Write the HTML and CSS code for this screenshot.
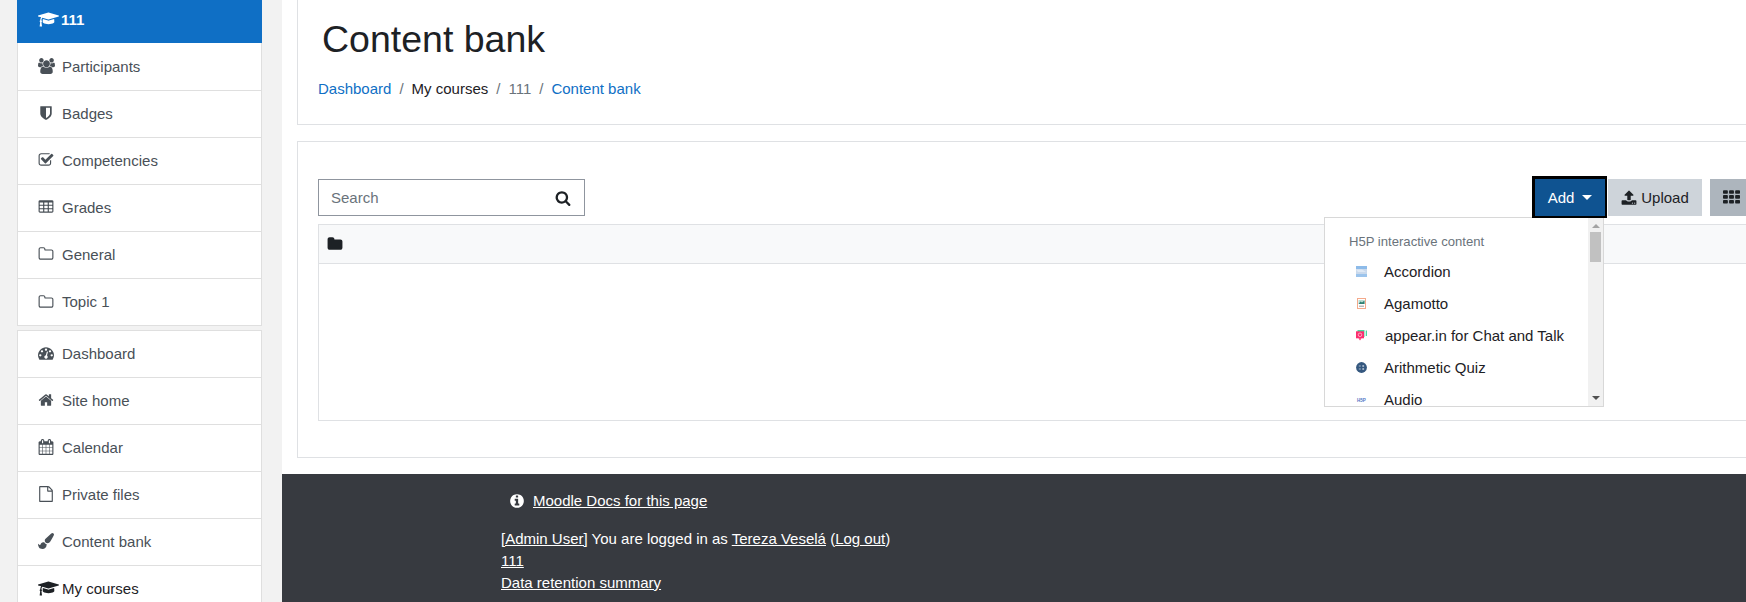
FILE: index.html
```html
<!DOCTYPE html>
<html lang="en">
<head>
<meta charset="utf-8">
<title>Content bank</title>
<link rel="stylesheet" href="styles.css">
</head>
<body>
<svg class="defs" xmlns="http://www.w3.org/2000/svg">
<symbol id="i-cap" viewBox="0 0 2304 1792"><path d="M1774 836l18 316q4 69-82 128t-235 93-323 34-323-34-235-93-82-128l18-316 574 181q22 7 48 7t48-7zm530-324q0 31-31 42l-1120 352q-4 1-10 1t-10-1l-652-206q-43 34-71 111.500t-34 178.500q63 36 63 109 0 69-58 107l58 433q2 14-8 25-9 11-24 11h-192q-15 0-24-11-10-11-8-25l58-433q-58-38-58-107 0-73 65-111 11-207 98-330l-333-104q-31-10-31-42t31-42l1120-352q4-1 10-1t10 1l1120 352q31 11 31 42z"/></symbol>
<symbol id="i-users" viewBox="0 0 1920 1792"><path d="M593 896q-162 5-265 128h-134q-82 0-138-40.500t-56-118.500q0-353 124-353 6 0 43.500 21t97.500 42.500 119 21.500q67 0 133-23-5 37-5 66 0 139 81 256zm1071 637q0 120-73 189.500t-194 69.500h-874q-121 0-194-69.500t-73-189.500q0-53 3.500-103.500t14-109 26.500-108.500 43-97.500 62-81 85.500-53.500 111.500-20q10 0 43 21.500t73 48 107 48 135 21.500 135-21.500 107-48 73-48 43-21.500q61 0 111.500 20t85.500 53.500 62 81 43 97.500 26.500 108.500 14 109 3.500 103.500zm-1024-1277q0 106-75 181t-181 75-181-75-75-181 75-181 181-75 181 75 75 181zm704 384q0 159-112.500 271.500t-271.500 112.500-271.500-112.500-112.500-271.500 112.500-271.500 271.500-112.500 271.500 112.500 112.500 271.500zm576 225q0 78-56 118.500t-138 40.500h-134q-103-123-265-128 81-117 81-256 0-29-5-66 66 23 133 23 59 0 119-21.500t97.500-42.500 43.500-21q124 0 124 353zm-128-609q0 106-75 181t-181 75-181-75-75-181 75-181 181-75 181 75 75 181z"/></symbol>
<symbol id="i-shield" viewBox="0 0 1792 1792"><path d="M1344 960v-640h-448v1137q119-63 213-137 235-184 235-360zm192-768v768q0 86-33.500 170.500t-83 150-118 127.500-126.500 103-121 77.500-89.500 49.500-42.500 20q-12 6-26 6t-26-6q-16-7-42.500-20t-89.500-49.500-121-77.500-126.500-103-118-127.500-83-150-33.500-170.500v-768q0-26 19-45t45-19h1152q26 0 45 19t19 45z"/></symbol>
<symbol id="i-check" viewBox="0 0 1792 1792"><path d="M1472 930v318q0 119-84.500 203.500t-203.500 84.500h-832q-119 0-203.500-84.500t-84.500-203.500v-832q0-119 84.500-203.500t203.500-84.500h832q63 0 117 25 15 7 18 23 3 17-9 29l-49 49q-10 10-23 10-3 0-9-2-23-6-45-6h-832q-66 0-113 47t-47 113v832q0 66 47 113t113 47h832q66 0 113-47t47-113v-254q0-13 9-22l64-64q10-10 23-10 6 0 12 3 20 8 20 29zm231-489l-814 814q-24 24-57 24t-57-24l-430-430q-24-24-24-57t24-57l110-110q24-24 57-24t57 24l263 263 647-647q24-24 57-24t57 24l110 110q24 24 24 57t-24 57z"/></symbol>
<symbol id="i-table" viewBox="0 0 1792 1792"><path d="M576 1376v-192q0-14-9-23t-23-9h-320q-14 0-23 9t-9 23v192q0 14 9 23t23 9h320q14 0 23-9t9-23zm0-384v-192q0-14-9-23t-23-9h-320q-14 0-23 9t-9 23v192q0 14 9 23t23 9h320q14 0 23-9t9-23zm512 384v-192q0-14-9-23t-23-9h-320q-14 0-23 9t-9 23v192q0 14 9 23t23 9h320q14 0 23-9t9-23zm-512-768v-192q0-14-9-23t-23-9h-320q-14 0-23 9t-9 23v192q0 14 9 23t23 9h320q14 0 23-9t9-23zm512 384v-192q0-14-9-23t-23-9h-320q-14 0-23 9t-9 23v192q0 14 9 23t23 9h320q14 0 23-9t9-23zm512 384v-192q0-14-9-23t-23-9h-320q-14 0-23 9t-9 23v192q0 14 9 23t23 9h320q14 0 23-9t9-23zm-512-768v-192q0-14-9-23t-23-9h-320q-14 0-23 9t-9 23v192q0 14 9 23t23 9h320q14 0 23-9t9-23zm512 384v-192q0-14-9-23t-23-9h-320q-14 0-23 9t-9 23v192q0 14 9 23t23 9h320q14 0 23-9t9-23zm0-384v-192q0-14-9-23t-23-9h-320q-14 0-23 9t-9 23v192q0 14 9 23t23 9h320q14 0 23-9t9-23zm128-320v1088q0 66-47 113t-113 47h-1344q-66 0-113-47t-47-113v-1088q0-66 47-113t113-47h1344q66 0 113 47t47 113z"/></symbol>
<symbol id="i-folder-o" viewBox="0 0 1792 1792"><path d="M1600 1312v-704q0-40-28-68t-68-28h-704q-40 0-68-28t-28-68v-64q0-40-28-68t-68-28h-320q-40 0-68 28t-28 68v960q0 40 28 68t68 28h1216q40 0 68-28t28-68zm128-704v704q0 92-66 158t-158 66h-1216q-92 0-158-66t-66-158v-960q0-92 66-158t158-66h320q92 0 158 66t66 158v32h672q92 0 158 66t66 158z"/></symbol>
<symbol id="i-folder" viewBox="0 0 1792 1792"><path d="M1728 608v704q0 92-66 158t-158 66h-1216q-92 0-158-66t-66-158v-960q0-92 66-158t158-66h320q92 0 158 66t66 158v32h672q92 0 158 66t66 158z"/></symbol>
<symbol id="i-dash" viewBox="0 0 1792 1792"><path d="M384 1152q0-53-37.500-90.500t-90.500-37.500-90.500 37.500-37.500 90.500 37.500 90.500 90.500 37.500 90.500-37.500 37.500-90.500zm192-448q0-53-37.500-90.500t-90.500-37.500-90.500 37.500-37.500 90.500 37.500 90.500 90.500 37.500 90.500-37.500 37.500-90.500zm428 481l101-382q6-26-7.500-48.500t-38.500-29.500-48 6.500-30 39.500l-101 382q-60 5-107 43.500t-63 98.500q-20 77 20 146t117 89 146-20 89-117q16-60-6-117t-72-91zm660-33q0-53-37.500-90.500t-90.500-37.500-90.500 37.500-37.500 90.500 37.500 90.500 90.500 37.500 90.500-37.500 37.500-90.500zm-640-640q0-53-37.500-90.500t-90.500-37.500-90.500 37.500-37.500 90.500 37.500 90.500 90.500 37.500 90.500-37.500 37.500-90.500zm448 192q0-53-37.500-90.500t-90.500-37.500-90.500 37.500-37.500 90.500 37.500 90.500 90.500 37.500 90.500-37.500 37.500-90.500zm320 448q0 261-141 483-19 29-54 29h-1402q-35 0-54-29-141-221-141-483 0-182 71-348t191-286 286-191 348-71 348 71 286 191 191 286 71 348z"/></symbol>
<symbol id="i-home" viewBox="0 0 1792 1792"><path d="M1472 992v480q0 26-19 45t-45 19h-384v-384h-256v384h-384q-26 0-45-19t-19-45v-480q0-1 .5-3t.5-3l575-474 575 474q1 2 1 6zm223-69l-62 74q-8 9-21 11h-3q-13 0-21-7l-692-577-692 577q-12 8-24 7-13-2-21-11l-62-74q-8-10-7-23.500t11-21.500l719-599q32-26 76-26t76 26l244 204v-195q0-14 9-23t23-9h192q14 0 23 9t9 23v408l219 182q10 8 11 21.500t-7 23.500z"/></symbol>
<symbol id="i-cal" viewBox="0 0 1664 1792"><path d="M128 1664h288v-288h-288v288zm352 0h320v-288h-320v288zm-352-352h288v-320h-288v320zm352 0h320v-320h-320v320zm-352-384h288v-288h-288v288zm736 736h320v-288h-320v288zm-384-736h320v-288h-320v288zm768 736h288v-288h-288v288zm-384-352h320v-320h-320v320zm-352-864v-288q0-13-9.500-22.500t-22.500-9.500h-64q-13 0-22.500 9.500t-9.500 22.500v288q0 13 9.500 22.500t22.500 9.500h64q13 0 22.500-9.500t9.500-22.500zm736 864h288v-320h-288v320zm-384-384h320v-288h-320v288zm384 0h288v-288h-288v288zm32-480v-288q0-13-9.500-22.500t-22.500-9.500h-64q-13 0-22.500 9.500t-9.500 22.500v288q0 13 9.500 22.500t22.500 9.500h64q13 0 22.500-9.500t9.500-22.500zm384-64v1280q0 52-38 90t-90 38h-1408q-52 0-90-38t-38-90v-1280q0-52 38-90t90-38h128v-96q0-66 47-113t113-47h64q66 0 113 47t47 113v96h384v-96q0-66 47-113t113-47h64q66 0 113 47t47 113v96h128q52 0 90 38t38 90z"/></symbol>
<symbol id="i-file" viewBox="0 0 1792 1792"><path d="M1596 380q28 28 48 76t20 88v1152q0 40-28 68t-68 28h-1344q-40 0-68-28t-28-68v-1600q0-40 28-68t68-28h896q40 0 88 20t76 48zm-444-244v376h376q-10-29-22-41l-313-313q-12-12-41-22zm384 1528v-1024h-416q-40 0-68-28t-28-68v-416h-768v1536h1280z"/></symbol>
<symbol id="i-brush" viewBox="0 0 1792 1792"><path d="M1615 0q70 0 122.500 46.500t52.500 116.500q0 63-45 151-332 629-465 752-97 91-218 91-126 0-216.500-92.500t-90.500-219.500q0-128 92-212l638-579q59-54 130-54zm-909 1034q39 76 106.500 130t150.500 76l1 71q4 213-129.500 347t-348.500 134q-123 0-218-46.500t-152.500-127.500-86.500-183-29-220q7 5 41 30t62 44.500 59 36.500 46 17q41 0 55-37 25-66 57.500-112.500t69.500-76 88-47.500 103-25.500 125-10.500z"/></symbol>
<symbol id="i-search" viewBox="0 0 1792 1792"><path d="M1216 832q0-185-131.500-316.500t-316.500-131.500-316.500 131.500-131.500 316.500 131.500 316.500 316.500 131.500 316.500-131.500 131.500-316.500zm512 832q0 52-38 90t-90 38q-54 0-90-38l-343-342q-179 124-399 124-143 0-273.500-55.500t-225-150-150-225-55.500-273.500 55.500-273.500 150-225 225-150 273.500-55.500 273.500 55.500 225 150 150 225 55.500 273.500q0 220-124 399l343 343q37 37 37 90z"/></symbol>
<symbol id="i-upload" viewBox="0 0 1792 1792"><path d="M1344 1472q0-26-19-45t-45-19-45 19-19 45 19 45 45 19 45-19 19-45zm256 0q0-26-19-45t-45-19-45 19-19 45 19 45 45 19 45-19 19-45zm128-224v320q0 40-28 68t-68 28h-1472q-40 0-68-28t-28-68v-320q0-40 28-68t68-28h427q21 56 70.500 92t110.500 36h256q61 0 110.500-36t70.500-92h427q40 0 68 28t28 68zm-325-648q-17 40-59 40h-256v448q0 26-19 45t-45 19h-256q-26 0-45-19t-19-45v-448h-256q-42 0-59-40-17-39 14-69l448-448q18-19 45-19t45 19l448 448q31 30 14 69z"/></symbol>
<symbol id="i-th" viewBox="0 0 1792 1792"><path d="M512 1248v192q0 40-28 68t-68 28h-320q-40 0-68-28t-28-68v-192q0-40 28-68t68-28h320q40 0 68 28t28 68zm0-512v192q0 40-28 68t-68 28h-320q-40 0-68-28t-28-68v-192q0-40 28-68t68-28h320q40 0 68 28t28 68zm640 512v192q0 40-28 68t-68 28h-320q-40 0-68-28t-28-68v-192q0-40 28-68t68-28h320q40 0 68 28t28 68zm-640-1024v192q0 40-28 68t-68 28h-320q-40 0-68-28t-28-68v-192q0-40 28-68t68-28h320q40 0 68 28t28 68zm640 512v192q0 40-28 68t-68 28h-320q-40 0-68-28t-28-68v-192q0-40 28-68t68-28h320q40 0 68 28t28 68zm640 512v192q0 40-28 68t-68 28h-320q-40 0-68-28t-28-68v-192q0-40 28-68t68-28h320q40 0 68 28t28 68zm-640-1024v192q0 40-28 68t-68 28h-320q-40 0-68-28t-28-68v-192q0-40 28-68t68-28h320q40 0 68 28t28 68zm640 512v192q0 40-28 68t-68 28h-320q-40 0-68-28t-28-68v-192q0-40 28-68t68-28h320q40 0 68 28t28 68zm0-512v192q0 40-28 68t-68 28h-320q-40 0-68-28t-28-68v-192q0-40 28-68t68-28h320q40 0 68 28t28 68z"/></symbol>
<symbol id="i-info" viewBox="0 0 1792 1792"><path d="M1152 1376v-160q0-14-9-23t-23-9h-96v-512q0-14-9-23t-23-9h-320q-14 0-23 9t-9 23v160q0 14 9 23t23 9h96v320h-96q-14 0-23 9t-9 23v160q0 14 9 23t23 9h448q14 0 23-9t9-23zm-128-896v-160q0-14-9-23t-23-9h-192q-14 0-23 9t-9 23v160q0 14 9 23t23 9h192q14 0 23-9t9-23zm640 416q0 209-103 385.500t-279.500 279.500-385.500 103-385.500-103-279.500-279.500-103-385.500 103-385.500 279.500-279.500 385.500-103 385.500 103 279.500 279.500 103 385.500z"/></symbol>
</svg>
<div class="page">
  <aside class="sidebar">
    <nav class="navcard">
      <a class="navitem active"><svg class="ic ic-cap"><use href="#i-cap"/></svg><b class="navbold">111</b></a>
      <a class="navitem"><svg class="ic ic-users"><use href="#i-users"/></svg>Participants</a>
      <a class="navitem"><svg class="ic"><use href="#i-shield"/></svg>Badges</a>
      <a class="navitem"><svg class="ic"><use href="#i-check"/></svg>Competencies</a>
      <a class="navitem"><svg class="ic"><use href="#i-table"/></svg>Grades</a>
      <a class="navitem"><svg class="ic"><use href="#i-folder-o"/></svg>General</a>
      <a class="navitem navlast"><svg class="ic"><use href="#i-folder-o"/></svg>Topic 1</a>
    </nav>
    <nav class="navcard">
      <a class="navitem"><svg class="ic"><use href="#i-dash"/></svg>Dashboard</a>
      <a class="navitem"><svg class="ic"><use href="#i-home"/></svg>Site home</a>
      <a class="navitem"><svg class="ic"><use href="#i-cal"/></svg>Calendar</a>
      <a class="navitem"><svg class="ic"><use href="#i-file"/></svg>Private files</a>
      <a class="navitem"><svg class="ic"><use href="#i-brush"/></svg>Content bank</a>
      <a class="navitem dark"><svg class="ic ic-cap"><use href="#i-cap"/></svg>My courses</a>
    </nav>
  </aside>
  <div class="content">
    <main class="main">
      <header class="card headcard">
        <h1 class="title">Content bank</h1>
        <ol class="crumbs">
          <li><a class="link">Dashboard</a></li>
          <li class="sep">/</li>
          <li class="crumb-dark">My courses</li>
          <li class="sep">/</li>
          <li class="crumb-muted">111</li>
          <li class="sep">/</li>
          <li><a class="link">Content bank</a></li>
        </ol>
      </header>
      <section class="card bodycard">
        <div class="toolbar">
          <div class="search">
            <span class="placeholder">Search</span>
            <svg class="search-ic"><use href="#i-search"/></svg>
          </div>
          <div class="actions">
            <div class="addwrap">
              <button class="btn btn-add">Add<span class="caret"></span></button>
              <div class="dropdown">
                <div class="droplist">
                  <div class="drophead">H5P interactive content</div>
                  <a class="dropitem">
                    <svg class="h5p" viewBox="0 0 11 11"><rect y="0" width="11" height="3" fill="#8dbbe9"/><rect y="3" width="11" height="5" fill="#c9d9ec"/><rect y="8" width="11" height="3" fill="#9cc4ec"/><path d="M0 3.500l6 0 4 2.500H2z" fill="#dfe9f5"/></svg>Accordion</a>
                  <a class="dropitem">
                    <svg class="h5p" viewBox="0 0 11 11"><rect x="1.500" y=".5" width="8" height="10" fill="#fff" stroke="#f4a98a"/><rect x="2.500" y="2" width="6" height="4" fill="#b8dcd4"/><path d="M2.500 6l2-2.500 1.500 1 2.500-2v3.500z" fill="#2f8174"/><rect x="3" y="7.500" width="5" height="1.500" fill="#bbb"/></svg>Agamotto</a>
                  <a class="dropitem">
                    <svg class="h5p" viewBox="0 0 11 11"><rect x="1.500" y="0" width="7" height="7" fill="#4ad9a0"/><rect x="9.700" y=".5" width="1.300" height="5.500" fill="#4ad9a0"/><rect y="1.300" width="8" height="7" fill="#fb2f6e"/><path d="M2.500 8.300h3l-1.500 2.200z" fill="#fb2f6e"/><circle cx="4" cy="4.800" r="1.800" fill="none" stroke="#ffc2d6" stroke-width=".8"/></svg><span class="shift">appear.in for Chat and Talk</span></a>
                  <a class="dropitem">
                    <svg class="h5p" viewBox="0 0 11 11"><circle cx="5.500" cy="5.500" r="5.400" fill="#35587f"/><path d="M2.800 4h2M2.800 7h2M6.200 4h2M6.200 7h2M7.200 3v2M7.200 6v2" stroke="#c5d2e0" stroke-width=".8"/></svg>Arithmetic Quiz</a>
                  <a class="dropitem">
                    <svg class="h5p" viewBox="0 0 11 11"><text class="h5p-mark" x="5.500" y="7.500">H5P</text></svg>Audio</a>
                </div>
                <div class="scrollbar">
                  <span class="arrow-up"></span>
                  <span class="thumb"></span>
                  <span class="arrow-down"></span>
                </div>
              </div>
            </div>
            <button class="btn btn-upload"><svg class="btn-ic"><use href="#i-upload"/></svg>Upload</button>
            <button class="btn btn-grid"><svg class="btn-ic"><use href="#i-th"/></svg></button>
          </div>
        </div>
        <div class="table">
          <div class="tablehead"><svg class="folder"><use href="#i-folder"/></svg></div>
          <div class="tablebody"></div>
        </div>
      </section>
    </main>
    <footer class="footer">
      <div class="docs"><svg class="info"><use href="#i-info"/></svg><a class="flink">Moodle Docs for this page</a></div>
      <div class="flines">
        <div><a class="flink">[Admin User]</a> You are logged in as <a class="flink">Tereza Veselá</a> (<a class="flink">Log out</a>)</div>
        <div><a class="flink">111</a></div>
        <div><a class="flink">Data retention summary</a></div>
      </div>
    </footer>
  </div>
</div>
</body>
</html>
```
FILE: styles.css
```css
* { box-sizing: border-box; }
html, body { margin: 0; padding: 0; height: 602px; overflow: hidden; background: #fff; }
body { font-family: "Liberation Sans", Arial, sans-serif; font-size: 15px; color: #1d2125; }
.defs { display: none; }
.page { display: flex; width: 1746px; height: 602px; overflow: hidden; }

.sidebar { flex: 0 0 282px; height: 602px; background: #f2f2f2; padding-left: 17px; display: flex; flex-direction: column; gap: 4px; overflow: hidden; }
.navcard { width: 245px; flex: none; background: #fff; border: 1px solid #dfdfdf; border-width: 0 1px 1px; }
.navcard + .navcard { border-width: 1px 1px 0; }
.navitem { display: flex; align-items: center; height: 47px; padding: 0 0 2px 20px; border-bottom: 1px solid #dfdfdf; color: #495057; white-space: nowrap; }
.navcard > .navitem:last-child { border-bottom: 0; }
.navitem.navlast { height: 46px; padding-bottom: 1px; }
.navitem.active { height: 44px; margin: 0 -1px; padding: 0 0 5px 21px; background: #0f6fc5; background-clip: padding-box; color: #fff; border-bottom: 1px solid transparent; }
.navbold { font-weight: 700; font-size: 15px; }
.navitem.dark { color: #1d2125; }
.ic { width: 16px; height: 16px; margin-right: 8px; fill: currentColor; flex: none; }
.ic-users { width: 17px; margin-right: 7px; }
.ic-cap { width: 21px; height: 17px; margin-right: 3px; }
.active .ic-cap { margin-right: 2px; }

.content { flex: 1; min-width: 0; display: flex; flex-direction: column; height: 602px; overflow: hidden; }
.main { flex: none; height: 474px; padding-left: 15px; display: flex; flex-direction: column; gap: 16px; overflow: hidden; }
.card { width: 1479px; flex: none; background: #fff; border: 1px solid #dfe1e4; }

.headcard { height: 125px; border-top: 0; padding-left: 20px; }
.title { margin: 0; padding: 17px 0 0 4px; font-size: 37.500px; line-height: 45px; font-weight: 400; color: #1d2125; }
.crumbs { list-style: none; display: flex; margin: 16px 0 0; padding: 0; line-height: 22px; }
.crumbs li { white-space: nowrap; }
.sep { padding: 0 8px; color: #6a737b; }
.link { color: #0f6fc5; }
.crumb-dark { color: #1d2125; }
.crumb-muted { color: #6a737b; }

.bodycard { height: 317px; padding: 37px 20px 0; }
.toolbar { display: flex; justify-content: space-between; align-items: flex-start; height: 37px; }
.search { width: 267px; height: 37px; border: 1px solid #8f959e; display: flex; align-items: center; justify-content: space-between; padding: 0 13px 0 12px; }
.placeholder { color: #6a737b; }
.search-ic { width: 16px; height: 16px; fill: #1d2125; }
.actions { display: flex; align-items: flex-start; }
.addwrap { position: relative; margin-right: 3px; }
.btn { font: inherit; height: 37px; border: 0; padding: 0; display: flex; align-items: center; justify-content: center; color: #1d2125; }
.btn-add { position: relative; z-index: 3; width: 70px; background: #0f5391; color: #fff; box-shadow: -3px -3px 0 #000, 2px 2px 0 #000, -3px 2px 0 #000, 2px -3px 0 #000; }
.caret { width: 0; height: 0; margin-left: 8px; border: 5px solid transparent; border-top-color: #fff; border-bottom: 0; }
.btn-upload { width: 94px; margin-right: 8px; background: #ced4da; }
.btn-grid { width: 45px; background: #adb5bd; }
.btn-ic { width: 16px; height: 16px; fill: #1d2125; margin-right: 4px; }
.btn-grid .btn-ic { width: 17px; height: 17px; margin-right: 3px; }

.dropdown { position: absolute; z-index: 2; top: 38px; right: 1px; width: 280px; height: 190px; display: flex; background: #fff; border: 1px solid #d8d8d8; }
.droplist { flex: 1; min-width: 0; overflow: hidden; padding: 14px 0 0 24px; }
.drophead { font-size: 13.100px; line-height: 20px; color: #6a737b; margin-bottom: 3px; }
.dropitem { display: flex; align-items: center; height: 32px; padding-left: 7px; color: #1d2125; white-space: nowrap; }
.h5p { width: 11px; height: 11px; margin-right: 17px; flex: none; }
.h5p-mark { font-size: 4.500px; font-weight: 700; fill: #4f73c4; text-anchor: middle; }
.shift { margin-left: 1px; }
.scrollbar { flex: 0 0 15px; background: #f1f1f1; display: flex; flex-direction: column; align-items: center; padding: 6px 0 6px; }
.arrow-up { width: 0; height: 0; border: 4px solid transparent; border-top: 0; border-bottom: 4px solid #a3a3a3; margin-bottom: 4px; }
.thumb { width: 11px; height: 30px; background: #c1c1c1; }
.arrow-down { width: 0; height: 0; margin-top: auto; border: 4px solid transparent; border-bottom: 0; border-top: 4px solid #505050; }

.table { margin-top: 8px; height: 197px; border: 1px solid #dfe1e4; }
.tablehead { height: 39px; background: #f8f9fa; border-bottom: 1px solid #dfe1e4; display: flex; align-items: center; padding-left: 8px; }
.folder { width: 16px; height: 16px; fill: #1d2125; }

.footer { flex: 1; background: #373a40; color: #fff; padding: 16px 0 0 219px; line-height: 22px; overflow: hidden; }
.docs { display: flex; align-items: center; padding-left: 8px; height: 22px; }
.info { width: 16px; height: 16px; fill: #fff; margin-right: 8px; }
.flines { margin-top: 16px; }
.flink { color: #fff; text-decoration: underline; }
```
